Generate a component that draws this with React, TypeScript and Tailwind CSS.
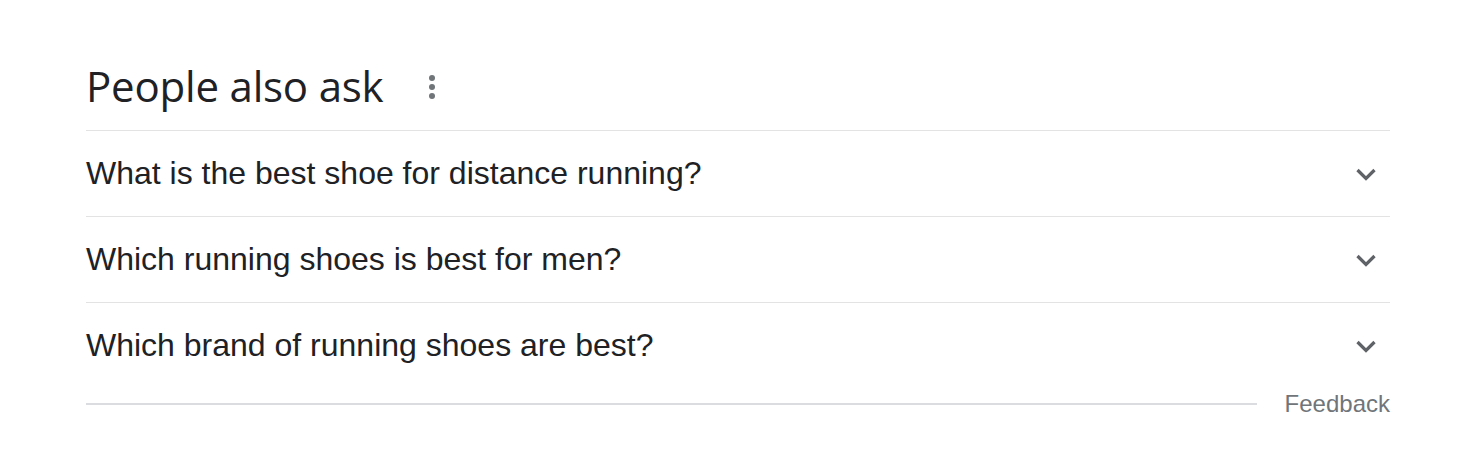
import React from 'react';

const questions = [
    'What is the best shoe for distance running?',
    'Which running shoes is best for men?',
    'Which brand of running shoes are best?',
];

function Chevron() {
    return (
        <svg width="30" height="30" viewBox="0 0 24 24" className="text-[#5f6368]">
            <path d="M5.2 8.8 12 15.6l6.8-6.8" fill="none" stroke="currentColor" strokeWidth="2.6" />
        </svg>
    );
}

export default function App() {
    return (
        <div className="w-[1480px] h-[472px] bg-white pl-[86px] pr-[90px] pt-[58px]">
            <div className="flex items-center h-[56px] mb-[16px]">
                <h2 className="text-[42px] leading-none text-[#202124] font-['Open_Sans',sans-serif] tracking-[-0.2px]">
                    People also ask
                </h2>
                <div className="ml-[46px] flex flex-col gap-[3px] mt-[2px]">
                    <span className="w-[6px] h-[6px] rounded-full bg-[#70757a]" />
                    <span className="w-[6px] h-[6px] rounded-full bg-[#70757a]" />
                    <span className="w-[6px] h-[6px] rounded-full bg-[#70757a]" />
                </div>
            </div>
            <div className="border-t border-[#e3e3e3] font-['Liberation_Sans',Arial,sans-serif]">
                {questions.map((q, i) => (
                    <div
                        key={q}
                        className={
                            'flex items-center justify-between h-[86px] ' +
                            (i < questions.length - 1 ? 'border-b border-[#e3e3e3]' : '')
                        }
                    >
                        <span className="text-[32px] text-[#202124] -mt-[2px]">{q}</span>
                        <span className="mr-[9px]">
                            <Chevron />
                        </span>
                    </div>
                ))}
            </div>
            <div className="flex items-center h-[30px] font-['Liberation_Sans',Arial,sans-serif]">
                <div className="flex-1 border-t-2 border-[#dadce0]" />
                <span className="ml-[28px] text-[24px] text-[#70757a]">Feedback</span>
            </div>
        </div>
    );
}
